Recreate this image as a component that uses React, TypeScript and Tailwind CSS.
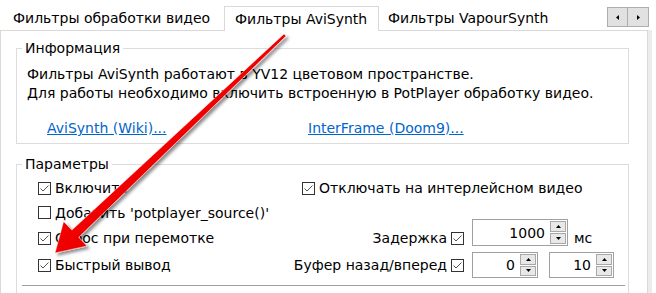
import React from "react";

function Cb({ checked }: { checked?: boolean }) {
  return (
    <span className="flex h-[13px] w-[13px] shrink-0 items-center justify-center border border-[#333333] bg-white">
      {checked && (
        <svg width="11" height="11" viewBox="0 0 11 11">
          <path d="M1.5 5.5 L4 8 L9.5 2.5" fill="none" stroke="#555555" strokeWidth="1" />
        </svg>
      )}
    </span>
  );
}

function SpinBtn({ up }: { up?: boolean }) {
  return (
    <div className="flex flex-1 items-center justify-center border border-[#a8a8a8] bg-[#e8e8e8]">
      <svg width="5" height="3" viewBox="0 0 5 3">
        {up ? <path d="M0 3 L2.5 0 L5 3 Z" fill="#000" /> : <path d="M0 0 L2.5 3 L5 0 Z" fill="#000" />}
      </svg>
    </div>
  );
}

function Spin({ value, className }: { value: string; className: string }) {
  return (
    <div className={"flex shrink-0 items-stretch border border-[#a0a0a0] bg-white " + className}>
      <div className="flex flex-1 items-center justify-end pr-[5px]">{value}</div>
      <div className="mr-[1px] flex w-[16px] flex-col gap-[1px] py-[1px]">
        <SpinBtn up />
        <SpinBtn />
      </div>
    </div>
  );
}

export default function App() {
  return (
    <div className="relative h-[293px] w-[656px] overflow-hidden bg-white font-['DejaVu_Sans',sans-serif] text-[14px] leading-[16px] text-black">
      {/* tab strip */}
      <div className="flex h-[30px] pt-[6px]">
        <div className="flex w-[224px] items-center whitespace-nowrap pl-[13px]">Фильтры обработки видео</div>
        <div className="relative z-10 -mb-px flex h-[25px] w-[155px] items-center self-start whitespace-nowrap border-x border-t border-[#d9d9d9] bg-white pb-[1px] pl-[10px]">
          Фильтры AviSynth
        </div>
        <div className="flex items-center whitespace-nowrap pl-[9px]">Фильтры VapourSynth</div>
        <div className="ml-auto mr-[7px] mt-[1px] flex h-[20px] self-start border border-[#adadad] bg-[#e1e1e1]">
          <div className="flex w-[20px] items-center justify-center border-r border-[#adadad]">
            <svg width="3" height="5" viewBox="0 0 3 5">
              <path d="M3 0 L0 2.5 L3 5 Z" fill="#000" />
            </svg>
          </div>
          <div className="flex w-[20px] items-center justify-center">
            <svg width="3" height="5" viewBox="0 0 3 5">
              <path d="M0 0 L3 2.5 L0 5 Z" fill="#000" />
            </svg>
          </div>
        </div>
      </div>

      {/* tab page */}
      <div className="flex">
        <div className="h-[263px] w-[648px] border-x border-t border-[#d9d9d9] bg-white pl-[15px]">
          <fieldset className="mt-[9px] w-[613px] border border-[#dcdcdc]">
            <legend className="ml-[5px] px-[3px] leading-[16px]">Информация</legend>
            <div className="pb-[5px] pl-[10px] pt-[9px] leading-[19px]">
              <div>Фильтры AviSynth работают в YV12 цветовом пространстве.</div>
              <div>Для работы необходимо включить встроенную в PotPlayer обработку видео.</div>
              <div className="mt-[16px] flex">
                <span className="ml-[20px] w-[261px] text-[#0066cc] underline">AviSynth (Wiki)...</span>
                <span className="text-[#0066cc] underline">InterFrame (Doom9)...</span>
              </div>
            </div>
          </fieldset>

          <fieldset className="mt-[12px] h-[200px] w-[613px] border border-[#dcdcdc]">
            <legend className="ml-[5px] px-[3px] leading-[16px]">Параметры</legend>
            <div className="pl-[21px] pt-[4px]">
              <div className="flex h-[24px] items-center">
                <div className="flex w-[264px] shrink-0 items-center gap-[4px]">
                  <Cb checked />
                  <span>Включить</span>
                </div>
                <div className="flex items-center gap-[4px] whitespace-nowrap">
                  <Cb checked />
                  <span>Отключать на интерлейсном видео</span>
                </div>
              </div>
              <div className="flex h-[25px] items-center">
                <div className="flex w-[264px] shrink-0 items-center gap-[4px] whitespace-nowrap">
                  <Cb />
                  <span>Добавить 'potplayer_source()'</span>
                </div>
              </div>
              <div className="flex h-[26px] items-center">
                <div className="flex w-[264px] shrink-0 items-center gap-[4px] whitespace-nowrap">
                  <Cb checked />
                  <span>Сброс при перемотке</span>
                </div>
                <div className="flex w-[162px] shrink-0 items-center justify-end gap-[4px] whitespace-nowrap">
                  <span>Задержка</span>
                  <Cb checked />
                </div>
                <Spin value="1000" className="-mt-[6px] ml-[8px] h-[27px] w-[96px] self-start" />
                <span className="ml-[6px]">мс</span>
              </div>
              <div className="flex h-[28px] items-center">
                <div className="flex w-[264px] shrink-0 items-center gap-[4px] whitespace-nowrap">
                  <Cb checked />
                  <span>Быстрый вывод</span>
                </div>
                <div className="flex w-[162px] shrink-0 items-center justify-end gap-[4px] whitespace-nowrap">
                  <span className="shrink-0">Буфер назад/вперед</span>
                  <Cb checked />
                </div>
                <Spin value="0" className="ml-[8px] h-[26px] w-[66px]" />
                <Spin value="10" className="ml-[11px] h-[26px] w-[65px]" />
              </div>
            </div>
            <div className="ml-[5px] mr-[3px] mt-[6px] h-px bg-[#a0a0a0]" />
          </fieldset>
        </div>
        <div className="h-[263px] w-[4px] bg-[#ececec]" />
      </div>

      {/* red annotation arrow */}
      <svg className="pointer-events-none absolute left-0 top-0" width="656" height="293" viewBox="0 0 656 293">
        <defs>
          <linearGradient id="arrowGrad" x1="0" y1="0" x2="1" y2="1">
            <stop offset="0" stopColor="#ff3b3b" />
            <stop offset="0.5" stopColor="#f00000" />
            <stop offset="1" stopColor="#c40000" />
          </linearGradient>
          <filter id="arrowShadow" x="-20%" y="-20%" width="140%" height="140%">
            <feDropShadow dx="2.5" dy="2.5" stdDeviation="1.8" floodColor="#000" floodOpacity="0.45" />
          </filter>
        </defs>
        <polygon
          points="55,253 87,246 78.7,237.3 286,36.1 284,33.9 71.9,230.1 63.6,221.4"
          fill="url(#arrowGrad)"
          stroke="#ffffff"
          strokeOpacity="0.6"
          strokeWidth="0.8"
          strokeLinejoin="round"
          filter="url(#arrowShadow)"
        />
      </svg>
    </div>
  );
}
